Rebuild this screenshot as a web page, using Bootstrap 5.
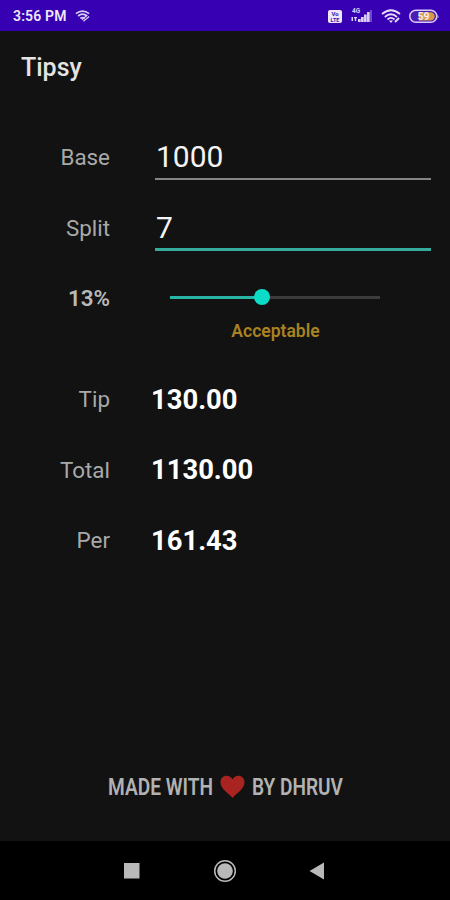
<!DOCTYPE html>
<html lang="en">
<head>
<meta charset="utf-8">
<meta name="viewport" content="width=device-width, initial-scale=1">
<title>Tipsy</title>
<link href="https://cdn.jsdelivr.net/npm/bootstrap@5.3.0/dist/css/bootstrap.min.css" rel="stylesheet">
<style>
body{background:#121212;color:#fff;font-family:Roboto,sans-serif;height:900px;overflow:hidden}
svg{display:block;flex:none;overflow:visible}
.statusbar{height:31px;background:#3700b3;color:#eee8fb;padding:1px 11px 0 13px;font-size:14px;font-weight:600;letter-spacing:.15px;line-height:1}
.appbar{height:91px;padding:18px 21px 0}
.appbar h1{font-size:25px;font-weight:500;line-height:37px;color:#e4e4e4}
.line{height:70.6px}
.lbl{width:110px;text-align:right;font-size:22.4px;color:#a9a9a9;flex:none}
.entry-line{padding-top:1px}
.entry-line .lbl{padding-top:1px}
.pct{font-weight:600;color:#b9b9b9}
.entry,.entry:focus{margin:0 19px 0 45px;padding:0 0 0 1px;height:44px;border:0;border-bottom:2px solid #858585;border-radius:0;background:none;box-shadow:none;color:#f4f4f4;font-size:30px;line-height:42px}
.entry.current{height:46px;padding-top:1px;border-bottom:3px solid #35ab9c}
.result{margin-left:41px;font-size:27.4px;font-weight:700}
.slider{width:210px;margin:0 0 2px 60px;height:3px;background:#3c3c3c}
.slider-fill{height:3px;background:#27b5a6}
.knob{width:16px;height:16px;border-radius:50%;background:#0cdbc8;margin-left:-8px;flex:none}
.rating{height:31px;margin-top:-13px;margin-bottom:13px;padding-left:101px;font-size:17.5px;font-weight:600;line-height:20px;color:#a98222}
.credit{height:108px;color:#b2b2b2;font-size:23px;font-weight:600;line-height:1}
.heart{margin:0 6px}
.softkeys{height:59px;background:#000}
</style>
</head>
<body class="d-flex flex-column">
<header class="statusbar d-flex align-items-center">
  <span id="clock">3:56 PM</span>
  <svg class="ms-2" width="16" height="14" viewBox="0 0 17 14" fill="none" stroke="#d9cdf5" stroke-width="1.8"><path d="M1 4.500Q8-1 15 4.500M3.300 7Q8 3.200 12.700 7M5.700 9.500Q8 7.700 10.300 9.500"/><path d="M9 12.500l6-5M7.500 11l5.500-5" stroke-width="1.300"/></svg>
  <div class="d-flex align-items-center ms-auto">
    <svg width="14" height="13" viewBox="0 0 14 13"><rect width="14" height="13" rx="2" fill="#eee7fb"/><g fill="#3b16a6" font-family="Roboto,sans-serif" font-weight="700" font-size="6" letter-spacing="0" text-anchor="middle"><text x="7" y="6">Vo</text><text x="7" y="11.500" font-size="5.500">LTE</text></g></svg>
    <svg class="ms-2" width="23" height="16" viewBox="0 0 23 16" fill="#d9cef5"><text x="2" y="4.500" font-family="Roboto,sans-serif" font-weight="700" font-size="6.500" letter-spacing="0">4G</text><path d="M1.500 13V9H3v4zM4 9h3v1.200h-.8V13H4.800v-2.800H4zM8 14v-3h2.700v3zM11 14V9h2.700v5zM14 14V6.500h2.700V14zM17 14V4h2.700v10z"/><path d="M20 14V2h2v12z" opacity=".35"/></svg>
    <svg class="ms-2" width="20" height="15" viewBox="0 0 20 15" fill="none" stroke="#e7ddfa" stroke-width="1.800"><path d="M1 5Q10-2.500 19 5M3.800 8Q10 2.500 16 8M6.500 10.500Q10 7.300 13.500 10.500"/><path d="M8 11.500h4l-2 2.500z" fill="#e7ddfa" stroke="none"/><path d="M14 13l4-4" stroke-width="2"/></svg>
    <svg class="ms-1 ps-1" width="34" height="15" viewBox="0 0 30 15"><rect x=".8" y="1.300" width="27" height="12" rx="6" fill="#4d1cb5" stroke="#d8ccf5" stroke-width="1.500"/><path d="M10 3.200h11.500a4.200 4.200 0 010 8.400H10z" fill="#d99a45"/><path d="M28.700 5.500q1.500 2 0 4" fill="#d8ccf5"/><text x="14.500" y="11.300" text-anchor="middle" font-family="Roboto,sans-serif" font-weight="700" font-size="10.500" letter-spacing="0" fill="#f4eafa">59</text></svg>
  </div>
</header>
<div class="appbar"><h1 class="m-0">Tipsy</h1></div>
<main class="flex-grow-1">
  <div class="line entry-line d-flex align-items-center"><label class="lbl" for="base">Base</label><input id="base" class="form-control entry" value="1000"></div>
  <div class="line entry-line d-flex align-items-center"><label class="lbl" for="split">Split</label><input id="split" class="form-control entry current" value="7"></div>
  <div class="line d-flex align-items-center"><span class="lbl pct">13%</span>
    <div class="slider d-flex align-items-center"><div class="slider-fill" style="width:43.8%"></div><div class="knob"></div></div>
  </div>
  <div class="rating text-center"><span>Acceptable</span></div>
  <div class="line d-flex align-items-center"><span class="lbl">Tip</span><span class="result">130.00</span></div>
  <div class="line d-flex align-items-center"><span class="lbl">Total</span><span class="result">1130.00</span></div>
  <div class="line d-flex align-items-center"><span class="lbl">Per</span><span class="result">161.43</span></div>
</main>
<footer class="credit d-flex justify-content-center align-items-center">
  <svg width="107" height="28"><text x="1" y="22" textLength="105" lengthAdjust="spacingAndGlyphs" fill="currentColor">MADE WITH</text></svg>
  <svg class="heart" width="25" height="24" viewBox="0 0 25 24"><path d="M12.500 23C10 19 .5 14.500.5 7.500.5 3 3.300.8 6.500.8c2.700 0 4.800 1.400 6 3.600 1.200-2.200 3.300-3.600 6-3.600 3.200 0 6 2.200 6 6.700 0 7-9.500 11.500-12 15.500z" fill="#a92320"/></svg>
  <svg width="93" height="28"><text x="1" y="22" textLength="91" lengthAdjust="spacingAndGlyphs" fill="currentColor">BY DHRUV</text></svg>
</footer>
<nav class="softkeys d-flex justify-content-center align-items-center">
  <svg width="200" height="24" viewBox="0 0 200 24" fill="#b9b9b9"><rect x="-1" y="4" width="15.500" height="15.500"/><circle cx="100" cy="12" r="7.800"/><circle cx="100" cy="12" r="10.300" fill="none" stroke="#b9b9b9" stroke-width="1.500"/><path d="M184.500 12L199 3.500v17z"/></svg>
</nav>
<script src="https://cdn.jsdelivr.net/npm/bootstrap@5.3.0/dist/js/bootstrap.bundle.min.js"></script>
</body>
</html>
